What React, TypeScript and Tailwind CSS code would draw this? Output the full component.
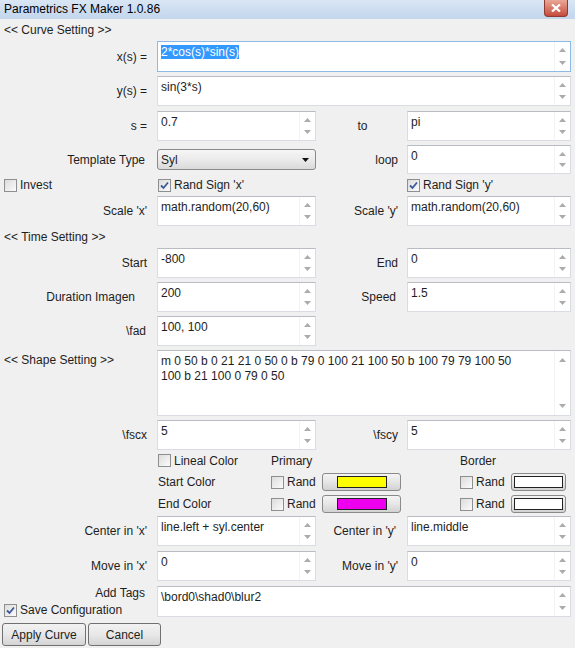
import React from 'react';

const Arrows = ({ tall }: { tall?: boolean }) => (
  <div
    className={`flex w-[16px] shrink-0 flex-col items-center justify-between border-l border-[#f3f3f3] ${
      tall ? 'py-[7px]' : 'py-[6px]'
    }`}
  >
    <svg width="7" height="4" viewBox="0 0 7 4">
      <path d="M0 4 L3.5 0 L7 4 Z" fill="#ababab" />
    </svg>
    <svg width="7" height="4" viewBox="0 0 7 4">
      <path d="M0 0 L3.5 4 L7 0 Z" fill="#ababab" />
    </svg>
  </div>
);

const Box = ({
  children,
  className = '',
  focused,
  tall,
}: {
  children?: React.ReactNode;
  className?: string;
  focused?: boolean;
  tall?: boolean;
}) => (
  <div
    className={`flex shrink-0 border bg-white ${
      focused ? 'border-[#8cbbe9]' : 'border-[#d9dce2] border-t-[#b9bcc2]'
    } ${className}`}
  >
    <div className="min-w-0 flex-1 px-[3px] pt-[3px] leading-[15px]">{children}</div>
    <Arrows tall={tall} />
  </div>
);

const Check = ({ checked }: { checked?: boolean }) => (
  <span className="flex h-[13px] w-[13px] shrink-0 items-center justify-center border border-[#8e8f8f] bg-gradient-to-br from-[#dcdcdc] to-[#fbfbfb]">
    {checked && (
      <svg width="9" height="9" viewBox="0 0 9 9">
        <path d="M1 4.5 L3.5 7 L8 1.5" stroke="#3b5998" strokeWidth="1.8" fill="none" />
      </svg>
    )}
  </span>
);

const CheckLabel = ({ label, checked }: { label: string; checked?: boolean }) => (
  <div className="flex items-center gap-[3px]">
    <Check checked={checked} />
    <span>{label}</span>
  </div>
);

const ColorButton = ({ color, className = '', swatch = '' }: { color: string; className?: string; swatch?: string }) => (
  <div
    className={`flex h-[18px] shrink-0 items-center justify-center rounded-[3px] border border-[#8a8a8a] bg-gradient-to-b from-[#f4f4f4] via-[#e6e6e6] to-[#d2d2d2] ${className}`}
  >
    <div className={`h-[12px] border border-[#222] ${swatch}`} style={{ backgroundColor: color }} />
  </div>
);

const WinButton = ({ label, className = '' }: { label: string; className?: string }) => (
  <div
    className={`flex h-[23px] items-center justify-center rounded-[3px] border border-[#707070] bg-gradient-to-b from-[#f2f2f2] via-[#e8e8e8] to-[#d4d4d4] ${className}`}
  >
    {label}
  </div>
);

const L1 = ({ children, pr = 'pr-[10px]' }: { children?: React.ReactNode; pr?: string }) => (
  <div className={`flex w-[157px] shrink-0 items-center justify-end ${pr}`}>{children}</div>
);

const L2 = ({ children, cls = 'justify-end pr-[9px]' }: { children?: React.ReactNode; cls?: string }) => (
  <div className={`flex w-[91px] shrink-0 items-center ${cls}`}>{children}</div>
);

export default function App() {
  return (
    <div className="h-[648px] w-[575px] overflow-hidden bg-[#f0f0f0] font-['Liberation_Sans',Arial,sans-serif] text-[12px] text-[#1e1e1e]">
      {/* Title bar */}
      <div className="flex h-[19px] items-start justify-between bg-gradient-to-b from-[#d9e6f5] to-[#c3d6ec] pl-[4px] pr-[7px]">
        <span className="pt-[2px] text-[12px] leading-[15px] text-black">Parametrics FX Maker 1.0.86</span>
        <div className="flex h-[17px] w-[24px] items-center justify-center rounded-b-[4px] border border-t-0 border-[#8e3c32] bg-gradient-to-b from-[#e9a696] to-[#c44a3c]">
          <svg width="10" height="8" viewBox="0 0 10 8">
            <path d="M1 0.5 L9 7.5 M9 0.5 L1 7.5" stroke="#fff" strokeWidth="2.2" />
          </svg>
        </div>
      </div>

      {/* Curve setting */}
      <div className="flex h-[22px] items-center pl-[4px]">&lt;&lt; Curve Setting &gt;&gt;</div>
      <div className="flex h-[31px]">
        <L1>x(s) =</L1>
        <Box focused className="w-[414px]">
          <span className="bg-[#3399ff] text-white">2*cos(s)*sin(s)</span>
        </Box>
      </div>
      <div className="mt-[4px] flex h-[30px]">
        <L1>y(s) =</L1>
        <Box className="w-[414px]">sin(3*s)</Box>
      </div>
      <div className="mt-[5px] flex h-[30px]">
        <L1>s =</L1>
        <Box className="w-[159px]">0.7</Box>
        <L2 cls="justify-center pl-[2px]">to</L2>
        <Box className="w-[164px]">pi</Box>
      </div>
      <div className="mt-[4px] flex h-[29px]">
        <L1 pr="pr-[12px]">Template Type</L1>
        <div className="flex w-[159px] shrink-0 items-center">
          <div className="flex h-[21px] w-full items-center justify-between rounded-[3px] border border-[#8a8a8a] bg-gradient-to-b from-[#f6f6f6] via-[#ebebeb] to-[#dadada] pl-[3px] pr-[6px]">
            <span>Syl</span>
            <svg width="7" height="4" viewBox="0 0 7 4">
              <path d="M0 0 L3.5 4 L7 0 Z" fill="#111" />
            </svg>
          </div>
        </div>
        <L2>loop</L2>
        <Box className="w-[164px]">0</Box>
      </div>
      <div className="flex h-[22px] items-center">
        <div className="w-[158px] shrink-0 pl-[4px]">
          <CheckLabel label="Invest" />
        </div>
        <div className="w-[249px] shrink-0">
          <CheckLabel label="Rand Sign 'x'" checked />
        </div>
        <CheckLabel label="Rand Sign 'y'" checked />
      </div>
      <div className="flex h-[30px]">
        <L1>Scale 'x'</L1>
        <Box className="w-[159px]">math.random(20,60)</Box>
        <L2>Scale 'y'</L2>
        <Box className="w-[164px]">math.random(20,60)</Box>
      </div>

      {/* Time setting */}
      <div className="flex h-[22px] items-center pl-[4px]">&lt;&lt; Time Setting &gt;&gt;</div>
      <div className="flex h-[30px]">
        <L1>Start</L1>
        <Box className="w-[159px]">-800</Box>
        <L2>End</L2>
        <Box className="w-[164px]">0</Box>
      </div>
      <div className="mt-[4px] flex h-[30px]">
        <L1 pr="pr-[22px]">Duration Imagen</L1>
        <Box className="w-[159px]">200</Box>
        <L2 cls="justify-end pr-[11px]">Speed</L2>
        <Box className="w-[164px]">1.5</Box>
      </div>
      <div className="mt-[4px] flex h-[30px]">
        <L1 pr="pr-[11px]">\fad</L1>
        <Box className="w-[159px]">100, 100</Box>
      </div>

      {/* Shape setting */}
      <div className="mt-[4px] flex h-[66px]">
        <div className="w-[157px] shrink-0 pl-[4px] pt-[3px] leading-[15px]">&lt;&lt; Shape Setting &gt;&gt;</div>
        <Box tall className="w-[414px]">
          m 0 50 b 0 21 21 0 50 0 b 79 0 100 21 100 50 b 100 79 79 100 50
          <br />
          100 b 21 100 0 79 0 50
        </Box>
      </div>
      <div className="mt-[4px] flex h-[30px]">
        <L1>\fscx</L1>
        <Box className="w-[159px]">5</Box>
        <L2>\fscy</L2>
        <Box className="w-[164px]">5</Box>
      </div>

      {/* Colors */}
      <div className="flex h-[21px] items-center">
        <div className="w-[158px] shrink-0" />
        <div className="w-[113px] shrink-0">
          <CheckLabel label="Lineal Color" />
        </div>
        <div className="w-[189px] shrink-0 pl-[-1px]">Primary</div>
        <div>Border</div>
      </div>
      {[
        { label: 'Start Color', color: '#ffff00' },
        { label: 'End Color', color: '#ee00ee' },
      ].map((row) => (
        <div key={row.label} className="flex h-[22px] items-center">
          <div className="w-[158px] shrink-0" />
          <div className="w-[113px] shrink-0">{row.label}</div>
          <div className="w-[51px] shrink-0">
            <CheckLabel label="Rand" />
          </div>
          <ColorButton color={row.color} className="w-[79px]" swatch="w-[50px]" />
          <div className="w-[59px] shrink-0" />
          <div className="w-[51px] shrink-0">
            <CheckLabel label="Rand" />
          </div>
          <ColorButton color="#ffffff" className="w-[55px]" swatch="w-[49px]" />
        </div>
      ))}

      <div className="mt-[1px] flex h-[30px]">
        <L1>Center in 'x'</L1>
        <Box className="w-[159px]">line.left + syl.center</Box>
        <L2 cls="justify-end pr-[11px]">Center in 'y'</L2>
        <Box className="w-[164px]">line.middle</Box>
      </div>
      <div className="mt-[5px] flex h-[30px]">
        <L1>Move in 'x'</L1>
        <Box className="w-[159px]">0</Box>
        <L2>Move in 'y'</L2>
        <Box className="w-[164px]">0</Box>
      </div>
      <div className="mt-[5px] flex h-[31px]">
        <div className="flex w-[157px] shrink-0 flex-col justify-between">
          <div className="pr-[12px] text-right leading-[15px]">Add Tags</div>
          <div className="pl-[4px]">
            <CheckLabel label="Save Configuration" checked />
          </div>
        </div>
        <Box className="w-[414px]">\bord0\shad0\blur2</Box>
      </div>

      <div className="mt-[6px] flex gap-[2px] pl-[2px]">
        <WinButton label="Apply Curve" className="w-[84px]" />
        <WinButton label="Cancel" className="w-[73px]" />
      </div>
    </div>
  );
}
